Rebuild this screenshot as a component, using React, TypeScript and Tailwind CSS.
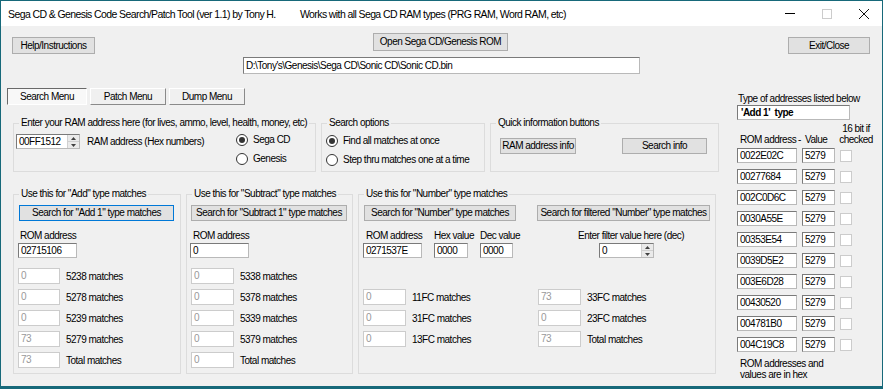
import React from "react"

type Cls = { className?: string }

function Btn({ label, className = "", focused = false }: { label: string; focused?: boolean } & Cls) {
  return (
    <button
      className={`flex items-center justify-center bg-[#e1e1e1] border whitespace-nowrap leading-none ${
        focused ? "border-[#0078d7]" : "border-[#adadad]"
      } ${className}`}
    >
      {label}
    </button>
  )
}

function TextBox({ value, className = "", dim = false, bold = false }: { value: string; dim?: boolean; bold?: boolean } & Cls) {
  return (
    <div
      className={`flex items-center pl-[2px] bg-white border whitespace-nowrap overflow-hidden leading-none ${
        dim ? "border-[#cccccc] text-[#999999]" : "border-[#7a7a7a] border-b-[#b9b9b9] border-r-[#b9b9b9]"
      } ${bold ? "font-bold" : ""} ${className}`}
    >
      {value}
    </div>
  )
}

function Spin({ value, className = "" }: { value: string } & Cls) {
  return (
    <div className={`flex bg-white border border-[#7a7a7a] border-b-[#b9b9b9] border-r-[#b9b9b9] ${className}`}>
      <div className="flex-1 flex items-center pl-[2px] leading-none">{value}</div>
      <div className="w-[12px] flex flex-col border-l border-[#d0d0d0] bg-[#eaeaea]">
        <div className="flex-1 flex items-center justify-center border-b border-[#cfcfcf]">
          <svg width="5" height="3" viewBox="0 0 5 3">
            <path d="M2.5 0 L5 3 L0 3 Z" fill="#404040" />
          </svg>
        </div>
        <div className="flex-1 flex items-center justify-center">
          <svg width="5" height="3" viewBox="0 0 5 3">
            <path d="M0 0 L5 0 L2.5 3 Z" fill="#404040" />
          </svg>
        </div>
      </div>
    </div>
  )
}

function Radio({ label, checked = false }: { label: string; checked?: boolean }) {
  return (
    <div className="flex items-center h-[13px] leading-[13px]">
      <span className="w-[12px] h-[12px] rounded-full border border-[#333333] bg-white flex items-center justify-center">
        {checked && <span className="w-[6px] h-[6px] rounded-full bg-[#333333]" />}
      </span>
      <span className="ml-[5px]">{label}</span>
    </div>
  )
}

function Group({ title, className = "", children }: { title: string; children?: React.ReactNode } & Cls) {
  return (
    <fieldset className={`border border-[#dcdcdc] ${className}`}>
      <legend className="ml-[5px] px-[2px] leading-[12px] whitespace-nowrap">{title}</legend>
      {children}
    </fieldset>
  )
}

function MatchRow({ value, label, boxClass = "", labelClass = "" }: { value: string; label: string; boxClass?: string; labelClass?: string }) {
  return (
    <div className="flex items-center h-[16px]">
      <TextBox value={value} dim className={`h-[16px] ${boxClass}`} />
      <span className={`ml-[6px] whitespace-nowrap ${labelClass}`}>{label}</span>
    </div>
  )
}

const addRows = [
  ["0", "5238 matches"],
  ["0", "5278 matches"],
  ["0", "5239 matches"],
  ["73", "5279 matches"],
  ["73", "Total matches"],
]

const subRows = [
  ["0", "5338 matches"],
  ["0", "5378 matches"],
  ["0", "5339 matches"],
  ["0", "5379 matches"],
  ["0", "Total matches"],
]

const numRows = [
  ["0", "11FC matches", "73", "33FC matches"],
  ["0", "31FC matches", "0", "23FC matches"],
  ["0", "13FC matches", "73", "Total matches"],
]

const romList = [
  "0022E02C",
  "00277684",
  "002C0D6C",
  "0030A55E",
  "00353E54",
  "0039D5E2",
  "003E6D28",
  "00430520",
  "004781B0",
  "004C19C8",
]

export default function App() {
  return (
    <div className="w-[883px] h-[389px] bg-[#17697a] pt-px px-px pb-[3px] flex flex-col font-['Liberation_Sans',Arial,sans-serif] text-[10px] tracking-[-0.5px] text-black overflow-hidden">
      {/* title bar */}
      <div className="h-[25px] bg-white flex items-center text-[10.5px] tracking-[-0.6px]">
        <span className="ml-[7px] w-[292px] whitespace-nowrap pt-[2px]">Sega CD &amp; Genesis Code Search/Patch Tool (ver 1.1) by Tony H.</span>
        <span className="whitespace-nowrap pt-[2px]">Works with all Sega CD RAM types (PRG RAM, Word RAM, etc)</span>
        <div className="ml-auto flex h-full">
          <div className="w-[37px] flex items-center justify-center">
            <div className="w-[10px] h-px bg-black" />
          </div>
          <div className="w-[37px] flex items-center justify-center">
            <div className="w-[10px] h-[10px] border border-[#cccccc]" />
          </div>
          <div className="w-[37px] flex items-center justify-center">
            <svg width="10" height="10" viewBox="0 0 10 10">
              <path d="M0 0 L10 10 M10 0 L0 10" stroke="#111" strokeWidth="1" />
            </svg>
          </div>
        </div>
      </div>

      <div className="flex-1 bg-[#f0f0f0] flex flex-col">
        {/* top buttons and path */}
        <div className="h-[62px] flex items-start">
          <Btn label="Help/Instructions" className="ml-[11px] mt-[11px] w-[83px] h-[17px]" />
          <div className="ml-[148px] w-[397px] flex flex-col">
            <Btn label="Open Sega CD/Genesis ROM" className="ml-[130px] mt-[7px] w-[135px] h-[18px]" />
            <TextBox value="D:\Tony's\Genesis\Sega CD\Sonic CD\Sonic CD.bin" className="mt-[6px] h-[17px]" />
          </div>
          <Btn label="Exit/Close" className="ml-[148px] mt-[11px] w-[82px] h-[17px]" />
        </div>

        <div className="flex-1 flex">
          {/* tab control */}
          <div className="w-[723px] flex flex-col">
            <div className="flex gap-[3px] ml-[6px] h-[17px]">
              <div className="w-[80px] flex items-center justify-center bg-[#f8f8f8] border border-t-[#696969] border-l-[#696969] border-b-white border-r-white">
                Search Menu
              </div>
              <div className="w-[76px] flex items-center justify-center border border-t-white border-l-white border-b-[#8a8a8a] border-r-[#8a8a8a]">
                Patch Menu
              </div>
              <div className="w-[76px] flex items-center justify-center border border-t-white border-l-white border-b-[#8a8a8a] border-r-[#8a8a8a]">
                Dump Menu
              </div>
            </div>

            {/* row A */}
            <div className="flex mt-[12px] ml-[12px] gap-[5px]">
              <Group title="Enter your RAM address here (for lives, ammo, level, health, money, etc)" className="w-[303px] h-[55px]">
                <div className="flex items-start">
                  <Spin value="00FF1512" className="ml-[2px] mt-[5px] w-[64px] h-[15px]" />
                  <span className="ml-[7px] mt-[6px] w-[149px] leading-[13px]">RAM address (Hex numbers)</span>
                  <div className="mt-[4px] flex flex-col gap-[6px]">
                    <Radio label="Sega CD" checked />
                    <Radio label="Genesis" />
                  </div>
                </div>
              </Group>
              <Group title="Search options" className="w-[164px] h-[55px]">
                <div className="ml-[4px] mt-[5px] flex flex-col gap-[6px]">
                  <Radio label="Find all matches at once" checked />
                  <Radio label="Step thru matches one at a time" />
                </div>
              </Group>
              <Group title="Quick information buttons" className="w-[229px] h-[55px]">
                <div className="flex mt-[9px] ml-[9px]">
                  <Btn label="RAM address info" className="w-[76px] h-[16px]" />
                  <Btn label="Search info" className="ml-[46px] w-[85px] h-[16px]" />
                </div>
              </Group>
            </div>

            {/* row B */}
            <div className="flex mt-[16px] ml-[12px]">
              <Group title={'Use this for "Add" type matches'} className="w-[168px] h-[186px]">
                <div className="flex flex-col items-start">
                  <Btn label={'Search for "Add 1" type matches'} focused className="ml-[5px] mt-[5px] w-[155px] h-[16px]" />
                  <span className="ml-[6px] mt-[8px] leading-[13px]">ROM address</span>
                  <TextBox value="02715106" className="ml-[4px] mt-[1px] w-[59px] h-[15px]" />
                  <div className="mt-[10px] ml-[4px] flex flex-col gap-[5px]">
                    {addRows.map(([v, l]) => (
                      <MatchRow key={l} value={v} label={l} boxClass="w-[42px]" />
                    ))}
                  </div>
                </div>
              </Group>
              <Group title={'Use this for "Subtract" type matches'} className="ml-[5px] w-[167px] h-[186px]">
                <div className="flex flex-col items-start">
                  <Btn label={'Search for "Subtract 1" type matches'} className="ml-[4px] mt-[5px] w-[156px] h-[16px]" />
                  <span className="ml-[6px] mt-[8px] leading-[13px]">ROM address</span>
                  <TextBox value="0" className="ml-[3px] mt-[1px] w-[59px] h-[15px]" />
                  <div className="mt-[10px] ml-[4px] flex flex-col gap-[5px]">
                    {subRows.map(([v, l]) => (
                      <MatchRow key={l} value={v} label={l} boxClass="w-[43px]" />
                    ))}
                  </div>
                </div>
              </Group>
              <Group title={'Use this for "Number" type matches'} className="ml-[5px] w-[358px] h-[186px]">
                <div className="flex flex-col items-start">
                  <div className="flex mt-[5px] ml-[5px]">
                    <Btn label={'Search for "Number" type matches'} className="w-[152px] h-[16px]" />
                    <Btn label={'Search for filtered "Number" type matches'} className="ml-[21px] w-[173px] h-[16px]" />
                  </div>
                  <div className="flex mt-[8px] ml-[7px] leading-[13px] whitespace-nowrap">
                    <span className="w-[68px]">ROM address</span>
                    <span className="w-[46px]">Hex value</span>
                    <span className="w-[98px]">Dec value</span>
                    <span>Enter filter value here (dec)</span>
                  </div>
                  <div className="flex mt-[1px] ml-[4px]">
                    <TextBox value="0271537E" className="w-[59px] h-[15px]" />
                    <TextBox value="0000" className="ml-[12px] w-[34px] h-[15px]" />
                    <TextBox value="0000" className="ml-[12px] w-[33px] h-[15px]" />
                    <Spin value="0" className="ml-[86px] w-[55px] h-[15px]" />
                  </div>
                  <div className="mt-[31px] ml-[4px] flex flex-col gap-[5px]">
                    {numRows.map(([v1, l1, v2, l2]) => (
                      <div key={l1} className="flex items-center">
                        <MatchRow value={v1} label={l1} boxClass="w-[43px]" labelClass="w-[126px]" />
                        <MatchRow value={v2} label={l2} boxClass="w-[43px]" />
                      </div>
                    ))}
                  </div>
                </div>
              </Group>
            </div>
          </div>

          {/* right panel */}
          <div className="flex-1 flex flex-col pl-[13px]">
            <span className="ml-[1px] mt-[4px] leading-[13px] whitespace-nowrap">Type of addresses listed below</span>
            <TextBox value="'Add 1'  type" bold className="w-[113px] h-[15px] whitespace-pre pl-[3px]" />
            <div className="flex items-end mt-[3px] leading-[11px] whitespace-nowrap">
              <span className="ml-[3px] w-[58px]">ROM address</span>
              <span className="w-[7px]">-</span>
              <span className="w-[33px]">Value</span>
              <span className="w-[36px] text-center">
                16 bit if
                <br />
                checked
              </span>
            </div>
            <div className="mt-[3px] flex flex-col gap-[6px]">
              {romList.map((a) => (
                <div key={a} className="flex items-center">
                  <TextBox value={a} className="w-[60px] h-[15px]" />
                  <TextBox value="5279" className="ml-[5px] w-[33px] h-[15px]" />
                  <div className="ml-[5px] w-[12px] h-[12px] bg-white border border-[#cccccc]" />
                </div>
              ))}
            </div>
            <span className="ml-[3px] mt-[6px] leading-[11px] whitespace-nowrap">
              ROM addresses and
              <br />
              values are in hex
            </span>
          </div>
        </div>
      </div>
    </div>
  )
}
